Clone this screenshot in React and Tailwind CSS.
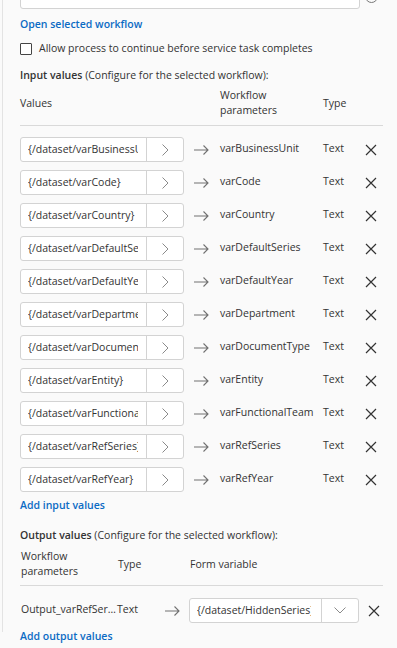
import React from 'react'

const inputs = [
  ['{/dataset/varBusinessUnit}', 'varBusinessUnit'],
  ['{/dataset/varCode}', 'varCode'],
  ['{/dataset/varCountry}', 'varCountry'],
  ['{/dataset/varDefaultSeries}', 'varDefaultSeries'],
  ['{/dataset/varDefaultYear}', 'varDefaultYear'],
  ['{/dataset/varDepartment}', 'varDepartment'],
  ['{/dataset/varDocumentType}', 'varDocumentType'],
  ['{/dataset/varEntity}', 'varEntity'],
  ['{/dataset/varFunctionalTeam}', 'varFunctionalTeam'],
  ['{/dataset/varRefSeries}', 'varRefSeries'],
  ['{/dataset/varRefYear}', 'varRefYear'],
]

function Arrow() {
  return (
    <svg width="15" height="10" viewBox="0 0 15 10" fill="none" stroke="#707070" strokeWidth="1.1">
      <path d="M0 5h14M9.5 0.5L14 5l-4.5 4.5" />
    </svg>
  )
}

function Cross() {
  return (
    <svg width="12" height="12" viewBox="0 0 12 12" fill="none" stroke="#333" strokeWidth="1.2">
      <path d="M1 1l10 10M11 1L1 11" />
    </svg>
  )
}

function Chevron({ down }) {
  return down ? (
    <svg width="12" height="7" viewBox="0 0 12 7" fill="none" stroke="#8a8a8a" strokeWidth="1">
      <path d="M0.5 0.5L6 6l5.5-5.5" />
    </svg>
  ) : (
    <svg width="7" height="12" viewBox="0 0 7 12" fill="none" stroke="#8a8a8a" strokeWidth="1">
      <path d="M0.5 0.5L6 6l-5.5 5.5" />
    </svg>
  )
}

export default function App() {
  return (
    <div className="w-[397px] h-[648px] overflow-hidden bg-[#fafafa] text-[#333] text-[10.5px] leading-[15px]" style={{ fontFamily: '"Open Sans", "Noto Sans", sans-serif' }}>
      <div className="ml-[2px] h-full border-l border-[#e3e3e3] pl-[17px] pr-[14px]">
        {/* top field, scrolled off */}
        <div className="flex items-end gap-[5px] -mt-[16px]">
          <div className="w-[340px] h-[25px] bg-white border border-[#d3d3d3] rounded-[3px]" />
          <div className="w-[13px] h-[13px] rounded-full border border-[#777] mb-[6px]" />
        </div>
        <a className="block mt-[8px] text-[#0b6bc4] font-semibold">Open selected workflow</a>
        <label className="flex items-center gap-[7px] mt-[9px]">
          <span className="w-[12px] h-[12px] border border-[#444] rounded-[1px] bg-white" />
          <span>Allow process to continue before service task completes</span>
        </label>
        <div className="mt-[12px]"><span className="font-semibold">Input values</span> (Configure for the selected workflow):</div>
        <div className="flex items-center mt-[5px] h-[30px]">
          <div className="w-[200px]">Values</div>
          <div className="w-[103px]">Workflow<br />parameters</div>
          <div>Type</div>
        </div>
        <div className="border-b border-[#d9d9d9] mt-[7px]" />
        <div className="mt-[11px] flex flex-col gap-[8px]">
          {inputs.map(([v, p]) => (
            <div key={p} className="flex items-center h-[25px]">
              <div className="flex h-[25px] border border-[#d3d3d3] rounded-[3px] bg-white">
                <div className="w-[125px] pl-[7px] pr-[8px]">
                  <div className="overflow-hidden whitespace-nowrap leading-[23px]">{v}</div>
                </div>
                <div className="w-[37px] border-l border-[#d3d3d3] flex items-center justify-center"><Chevron /></div>
              </div>
              <div className="ml-[10px] w-[26px]"><Arrow /></div>
              <div className="w-[103px] -mt-[3px]">{p}</div>
              <div className="w-[42px] -mt-[3px]">Text</div>
              <Cross />
            </div>
          ))}
        </div>
        <a className="block mt-[6px] text-[#0b6bc4] font-semibold">Add input values</a>
        <div className="mt-[15px]"><span className="font-semibold">Output values</span> (Configure for the selected workflow):</div>
        <div className="flex items-center mt-[6px] h-[30px] pl-[1px]">
          <div className="w-[97px]">Workflow<br />parameters</div>
          <div className="w-[72px]">Type</div>
          <div>Form variable</div>
        </div>
        <div className="border-b border-[#d9d9d9] mt-[6px]" />
        <div className="flex items-center h-[25px] mt-[12px] pl-[1px]">
          <div className="w-[96px] -mt-[3px] whitespace-nowrap overflow-hidden text-ellipsis">Output_varRefSeries</div>
          <div className="w-[48px] -mt-[3px]">Text</div>
          <div className="w-[24px]"><Arrow /></div>
          <div className="flex h-[25px] border border-[#d3d3d3] rounded-[3px] bg-white">
            <div className="w-[131px] pl-[7px] pr-[10px]">
              <div className="overflow-hidden whitespace-nowrap leading-[23px]">{'{/dataset/HiddenSeries}'}</div>
            </div>
            <div className="w-[37px] border-l border-[#d3d3d3] flex items-center justify-center"><Chevron down /></div>
          </div>
          <div className="ml-[9px]"><Cross /></div>
        </div>
        <a className="block mt-[6px] text-[#0b6bc4] font-semibold">Add output values</a>
      </div>
    </div>
  )
}
